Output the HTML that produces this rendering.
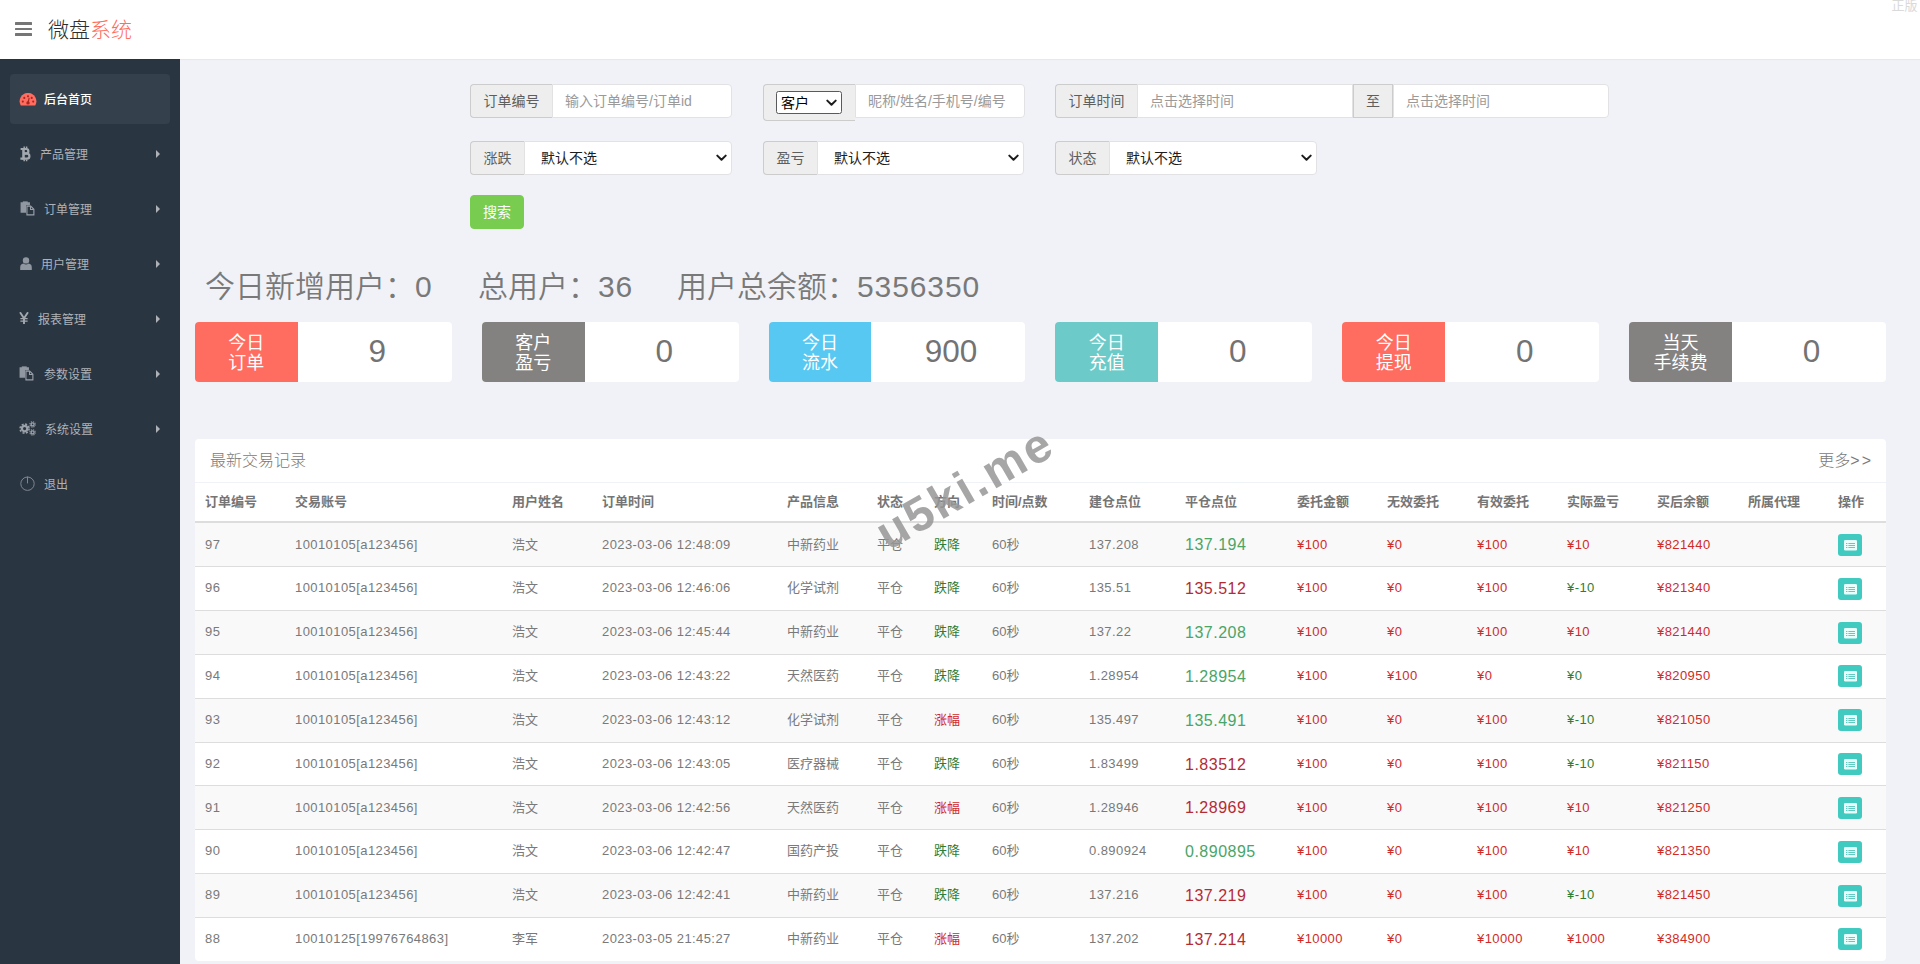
<!DOCTYPE html>
<html lang="zh-CN">
<head>
<meta charset="utf-8">
<title>微盘系统</title>
<style>
*{box-sizing:border-box;}
html,body{margin:0;padding:0;}
body{width:1920px;height:964px;overflow:hidden;background:#f1f2f7;color:#797979;
  font-family:"Liberation Sans","Noto Sans CJK SC",sans-serif;font-size:13px;line-height:1.42857;position:relative;}
a{text-decoration:none;color:inherit;}
ul{list-style:none;margin:0;padding:0;}

/* ---------- header ---------- */
#header{position:absolute;left:0;top:0;width:1920px;height:59px;background:#fff;z-index:5;box-shadow:0 1px 1px rgba(0,0,0,.04);}
#header .toggle{position:absolute;left:15px;top:22px;width:17px;height:14px;}
#header .toggle i{display:block;height:2.7px;background:#767676;margin-bottom:3px;border-radius:.5px;}
#header .logo{position:absolute;left:48px;top:14.5px;font-size:21px;line-height:30px;color:#2e2e2e;font-weight:300;white-space:nowrap;}
#header .logo span{color:#ff6c60;}
#header .tip{position:absolute;left:1891.5px;top:-3px;font-size:13px;line-height:18px;color:#dadada;white-space:nowrap;}

/* ---------- sidebar ---------- */
#sidebar{position:absolute;left:0;top:59px;width:180px;height:905px;background:#2a3542;}
#sidebar ul{margin-top:15px;}
#sidebar li{margin:0 10px 5px 10px;height:50px;position:relative;border-radius:4px;}
#sidebar li.active{background:#35404d;}
#sidebar li a{display:block;height:50px;line-height:50px;color:#aeb2b7;font-size:12px;white-space:nowrap;}
#sidebar li.active a{color:#fff;font-weight:500;}
#sidebar li svg.ic{position:absolute;}
#sidebar li .txt{position:absolute;top:1px;}
#sidebar li .arr{position:absolute;left:146px;top:21px;width:0;height:0;border-top:4px solid transparent;border-bottom:4px solid transparent;border-left:4px solid #aeb2b7;}

/* ---------- main ---------- */
#main{position:absolute;left:180px;top:59px;width:1740px;height:905px;}

/* ---------- search form ---------- */
.ig{position:absolute;height:34px;display:flex;font-size:14px;}
.ig .ad{height:34px;line-height:20px;padding:6px 0;text-align:center;background:#eee;border:1px solid #ccc;color:#5e5e5e;flex:none;white-space:nowrap;}
.ig .ad.first{border-radius:4px 0 0 4px;border-right:0;}
.ig .ad.mid{border-left:0;border-right:0;}
.ig input,.ig select{font-family:"Liberation Sans","Noto Sans CJK SC",sans-serif;font-size:14px;}
.ig .fc{height:34px;flex:none;background:#fff;border:1px solid #e2e2e4;border-radius:0 4px 4px 0;padding:6px 12px;color:#555;line-height:20px;margin:0;outline:0;box-shadow:none;}
.ig .fc.nr{border-radius:0;}
.ig input.fc::placeholder{color:#9a9a9a;opacity:1;}
.ig .sel{position:relative;flex:none;height:34px;}
.ig .sel select{-webkit-appearance:none;appearance:none;width:100%;height:34px;background:#fff;border:1px solid #e2e2e4;border-radius:0 4px 4px 0;padding:6px 12px 6px 16px;color:#1c1c1c;line-height:20px;margin:0;outline:0;}
.ig .sel svg{position:absolute;right:5px;top:13px;pointer-events:none;}
.ig .mini{position:relative;display:inline-block;width:66px;height:23px;vertical-align:top;margin-left:-1px;}
.ig .mini select{-webkit-appearance:none;appearance:none;width:66px;height:23px;background:#fff;border:1px solid #5a5a5a;border-radius:2.5px;padding:0 0 0 4px;color:#000;line-height:20px;margin:0;outline:0;}
.ig .mini svg{position:absolute;right:5px;top:8px;pointer-events:none;}
.btn-s{position:absolute;left:290px;top:136px;width:54px;height:34px;border:1px solid #78cd51;background:#78cd51;color:#fff;border-radius:4px;font-size:14px;line-height:20px;padding:6px 0;text-align:center;font-family:"Liberation Sans","Noto Sans CJK SC",sans-serif;}

/* ---------- stats ---------- */
.sumline{position:absolute;left:0;top:208px;height:40px;line-height:40px;font-size:30px;color:#797979;font-weight:350;white-space:nowrap;}
.sumline span{position:absolute;top:0;}
.sumline b{font-weight:400;letter-spacing:.9px;}
.card{position:absolute;top:263px;width:256.83px;height:60px;background:#fff;border-radius:4px;overflow:hidden;}
.card .sym{position:absolute;left:0;top:0;width:102.7px;height:60px;color:#fff;font-size:18px;line-height:20px;padding-top:10.5px;text-align:center;font-weight:400;}
.card .val{position:absolute;right:0;top:0;width:149px;height:60px;line-height:59px;text-align:center;font-size:31.5px;color:#737373;font-weight:300;}
.c-red{background:#ff6c60;}.c-gray{background:#848281;}.c-blue{background:#57c8f2;}.c-ter{background:#6ccac9;}

/* ---------- panel ---------- */
.panel{position:absolute;left:15px;top:380px;width:1691px;background:#fff;border-radius:4px;overflow:hidden;}
.panel .ph{height:43.857px;padding:11px 15px 9px;border-bottom:1px solid #eff2f7;font-size:16px;line-height:22.857px;color:#797979;font-weight:300;position:relative;}
.panel .ph .more{position:absolute;right:15px;top:11px;white-space:nowrap;}
table.tb{border-collapse:separate;border-spacing:0;table-layout:fixed;width:1691px;}
.tb th{height:40.571px;padding:0 10px;text-align:left;font-weight:700;color:#757575;border-bottom:2px solid #ddd;white-space:nowrap;font-size:13px;line-height:18.57px;vertical-align:middle;}
.tb td{height:43.857px;padding:0 10px;border-bottom:1px solid #ddd;white-space:nowrap;font-size:13px;vertical-align:middle;color:#797979;}
.tb tbody tr:nth-child(odd) td{background:#f9f9f9;}
.tb tbody tr:last-child td{border-bottom:0;height:42.857px;}
.tb td.ls{letter-spacing:.42px;}
.tb td.cp{font-size:16px;letter-spacing:.5px;padding-top:2px;}
.tb td.g1{color:#4aa567;}.tb td.r1{color:#b52b33;}
.tb td.g2{color:#2f7d32;}.tb td.r2{color:#cf2a27;}
.opb{display:inline-block;width:24px;height:22px;background:#41cac0;border-radius:3px;vertical-align:middle;position:relative;}
.opb svg{position:absolute;left:6px;top:6px;}
.wm{position:absolute;left:785px;top:428.5px;font-size:48px;font-weight:700;color:rgba(150,150,150,.85);letter-spacing:2.5px;transform:translate(-50%,-50%) rotate(-30deg);white-space:nowrap;line-height:1;}
</style>
</head>
<body>

<div id="header">
  <div class="toggle"><i></i><i></i><i></i></div>
  <a class="logo">微盘<span>系统</span></a>
  <div class="tip">正版</div>
</div>

<div id="sidebar">
  <ul>
    <li class="active"><a><svg class="ic" style="left:9px;top:19px" width="18" height="13" viewBox="0 0 18 13"><path d="M1.6 12.3A8.4 8.4 0 1 1 16.4 12.3Q16.2 12.6 15.8 12.6H2.2Q1.8 12.6 1.6 12.3Z" fill="#ff6c60"/><g fill="#a8271f"><circle cx="3.8" cy="8.6" r="1.05"/><circle cx="5.3" cy="4.9" r="1.05"/><circle cx="9" cy="3.2" r="1.05"/><circle cx="12.7" cy="4.9" r="1.05"/><circle cx="14.2" cy="8.6" r="1.05"/><circle cx="9" cy="9.9" r="1.7"/><path d="M8.4 9.5L9.7 4.6L10.6 4.9L9.7 9.9Z"/></g></svg><span class="txt" style="left:34px">后台首页</span></a></li>
    <li><a><svg class="ic" style="left:10px;top:17px" width="12" height="16" viewBox="0 0 12 16"><g fill="none" stroke="#a3a8ae" stroke-linecap="butt"><path d="M3.5 2.4V13.6" stroke-width="2.6"/><path d="M0.6 3H6.2a2.15 2.15 0 0 1 0 4.3H3.4" stroke-width="2.2"/><path d="M3.4 7.7H6.9a2.5 2.5 0 0 1 0 5H0.4" stroke-width="2.2"/><path d="M4.2 0.6V2.4M6.6 0.6V2.4M4.2 13.4V15.2M6.6 13.4V15.2" stroke-width="1.5"/></g></svg><span class="txt" style="left:30px">产品管理</span><b class="arr"></b></a></li>
    <li><a><svg class="ic" style="left:9.6px;top:17.4px" width="15" height="15" viewBox="0 0 16 16"><path d="M0.6 1.4H10.6V4.4H6.4V12.6H0.6Z" fill="#9097a0"/><rect x="3" y="0.4" width="5.2" height="2" fill="#9097a0"/><path d="M7.4 5.4H11.4L14.8 8.8V14.8H7.4Z" fill="none" stroke="#9aa0a8" stroke-width="1.2"/><path d="M11.2 5.6V9H14.6" fill="none" stroke="#9aa0a8" stroke-width="1.1"/></svg><span class="txt" style="left:34px">订单管理</span><b class="arr"></b></a></li>
    <li><a><svg class="ic" style="left:10px;top:18px" width="12" height="13" viewBox="0 0 12 13"><circle cx="6" cy="3.4" r="3.2" fill="#9097a0"/><path d="M0.2 12.9V10.4Q0.2 7 3.4 6.6Q6 8.6 8.6 6.6Q11.8 7 11.8 10.4V12.9Z" fill="#9097a0"/></svg><span class="txt" style="left:31px">用户管理</span><b class="arr"></b></a></li>
    <li><a><svg class="ic" style="left:9px;top:18px" width="10" height="12" viewBox="0 0 10 12"><g fill="none" stroke="#a4a9af"><path d="M1 0.3L5 6.2L9 0.3" stroke-width="1.9"/><path d="M5 5.8V12" stroke-width="1.9"/><path d="M1.4 6.6H8.6M1.4 9.2H8.6" stroke-width="1.2"/></g></svg><span class="txt" style="left:28px">报表管理</span><b class="arr"></b></a></li>
    <li><a><svg class="ic" style="left:9.4px;top:17.4px" width="15" height="15" viewBox="0 0 16 16"><path d="M0.6 1.4H10.6V4.4H6.4V12.6H0.6Z" fill="#9097a0"/><rect x="3" y="0.4" width="5.2" height="2" fill="#9097a0"/><path d="M7.4 5.4H11.4L14.8 8.8V14.8H7.4Z" fill="none" stroke="#9aa0a8" stroke-width="1.2"/><path d="M11.2 5.6V9H14.6" fill="none" stroke="#9aa0a8" stroke-width="1.1"/></svg><span class="txt" style="left:34px">参数设置</span><b class="arr"></b></a></li>
    <li><a><svg class="ic" style="left:9px;top:17px" width="18" height="15" viewBox="0 0 18 15"><g fill="none" stroke="#9aa0a8"><circle cx="5.6" cy="7.6" r="2.7" stroke-width="2.2"/><circle cx="5.6" cy="7.6" r="4.5" stroke-width="1.6" stroke-dasharray="2 1.534"/><circle cx="13.6" cy="3.4" r="1.5" stroke-width="1.4"/><circle cx="13.6" cy="3.4" r="2.7" stroke-width="1.1" stroke-dasharray="1.2 0.92"/><circle cx="13.6" cy="11.4" r="1.5" stroke-width="1.4"/><circle cx="13.6" cy="11.4" r="2.7" stroke-width="1.1" stroke-dasharray="1.2 0.92"/></g></svg><span class="txt" style="left:35px">系统设置</span><b class="arr"></b></a></li>
    <li><a><svg class="ic" style="left:10px;top:17px" width="15" height="15" viewBox="0 0 15 15"><circle cx="7.5" cy="7.7" r="6.7" fill="none" stroke="#7f868e" stroke-width="1"/><path d="M7.5 0.6V7.4" stroke="#7f868e" stroke-width="1" fill="none"/></svg><span class="txt" style="left:34px">退出</span></a></li>
  </ul>
</div>

<div id="main">

<div id="search">
  <div class="ig" style="left:290px;top:25px;width:262px;">
    <span class="ad first" style="width:82px">订单编号</span>
    <input class="fc" style="width:180px" type="text" placeholder="输入订单编号/订单id">
  </div>
  <div class="ig" style="left:583px;top:25px;width:262px;">
    <span class="ad first" style="width:92px;height:37px;padding:6px 0 0 0;"><span class="mini"><select><option>客户</option><option>代理</option></select><svg width="11" height="8" viewBox="0 0 11 8"><path d="M1.3 1.6L5.5 5.8L9.7 1.6" fill="none" stroke="#1c1c1c" stroke-width="2" stroke-linecap="round" stroke-linejoin="round"/></svg></span></span>
    <input class="fc" style="width:170px" type="text" placeholder="昵称/姓名/手机号/编号">
  </div>
  <div class="ig" style="left:875px;top:25px;width:554px;">
    <span class="ad first" style="width:82px">订单时间</span>
    <input class="fc nr" style="width:216px" type="text" placeholder="点击选择时间">
    <span class="ad mid" style="width:40px;border-left:1px solid #ccc;border-right:1px solid #ccc;">至</span>
    <input class="fc" style="width:216px" type="text" placeholder="点击选择时间">
  </div>

  <div class="ig" style="left:290px;top:82px;width:262px;">
    <span class="ad first" style="width:54px">涨跌</span>
    <span class="sel" style="width:208px"><select><option>默认不选</option><option>涨幅</option><option>跌降</option></select><svg width="11" height="8" viewBox="0 0 11 8"><path d="M1.3 1.6L5.5 5.8L9.7 1.6" fill="none" stroke="#1c1c1c" stroke-width="2" stroke-linecap="round" stroke-linejoin="round"/></svg></span>
  </div>
  <div class="ig" style="left:583px;top:82px;width:261px;">
    <span class="ad first" style="width:54px">盈亏</span>
    <span class="sel" style="width:207px"><select><option>默认不选</option><option>盈利</option><option>亏损</option></select><svg width="11" height="8" viewBox="0 0 11 8"><path d="M1.3 1.6L5.5 5.8L9.7 1.6" fill="none" stroke="#1c1c1c" stroke-width="2" stroke-linecap="round" stroke-linejoin="round"/></svg></span>
  </div>
  <div class="ig" style="left:875px;top:82px;width:262px;">
    <span class="ad first" style="width:54px">状态</span>
    <span class="sel" style="width:208px"><select><option>默认不选</option><option>建仓</option><option>平仓</option></select><svg width="11" height="8" viewBox="0 0 11 8"><path d="M1.3 1.6L5.5 5.8L9.7 1.6" fill="none" stroke="#1c1c1c" stroke-width="2" stroke-linecap="round" stroke-linejoin="round"/></svg></span>
  </div>
  <a class="btn-s">搜索</a>
</div>

<div class="sumline"><span style="left:25px">今日新增用户：<b>0</b></span><span style="left:298px">总用户：<b>36</b></span><span style="left:497px">用户总余额：<b>5356350</b></span></div>
<div class="card" style="left:15.00px"><div class="sym c-red">今日<br>订单</div><div class="val">9</div></div>
<div class="card" style="left:301.83px"><div class="sym c-gray">客户<br>盈亏</div><div class="val">0</div></div>
<div class="card" style="left:588.66px"><div class="sym c-blue">今日<br>流水</div><div class="val">900</div></div>
<div class="card" style="left:875.49px"><div class="sym c-ter">今日<br>充值</div><div class="val">0</div></div>
<div class="card" style="left:1162.32px"><div class="sym c-red">今日<br>提现</div><div class="val">0</div></div>
<div class="card" style="left:1449.15px"><div class="sym c-gray">当天<br>手续费</div><div class="val">0</div></div>

<div class="panel">
<div class="ph">最新交易记录<span class="more">更多<i style="font-style:normal;letter-spacing:2px;margin-right:-2px">&gt;&gt;</i></span></div>
<table class="tb"><colgroup><col style="width:90px"><col style="width:217px"><col style="width:90px"><col style="width:185px"><col style="width:90px"><col style="width:57px"><col style="width:58px"><col style="width:97px"><col style="width:96px"><col style="width:112px"><col style="width:90px"><col style="width:90px"><col style="width:90px"><col style="width:90px"><col style="width:91px"><col style="width:90px"><col style="width:58px"></colgroup>
<thead><tr><th>订单编号</th><th>交易账号</th><th>用户姓名</th><th>订单时间</th><th>产品信息</th><th>状态</th><th>方向</th><th>时间/点数</th><th>建仓点位</th><th>平仓点位</th><th>委托金额</th><th>无效委托</th><th>有效委托</th><th>实际盈亏</th><th>买后余额</th><th>所属代理</th><th>操作</th></tr></thead>
<tbody>
<tr><td class="ls">97</td><td class="ls">10010105[a123456]</td><td>浩文</td><td class="ls">2023-03-06 12:48:09</td><td>中新药业</td><td>平仓</td><td class="g2">跌降</td><td>60秒</td><td class="ls">137.208</td><td class="cp g1">137.194</td><td class="ls r2">¥100</td><td class="ls r2">¥0</td><td class="ls r2">¥100</td><td class="ls r2">¥10</td><td class="ls r2">¥821440</td><td></td><td><a class="opb"><svg width="13" height="11" viewBox="0 0 13 11"><rect x="0" y="0" width="13" height="10.4" rx="1.2" fill="#e9fffc"/><path d="M2 3.5H3.4M4.4 3.5H11M2 5.5H3.4M4.4 5.5H11M2 7.5H3.4M4.4 7.5H11" stroke="#62cbc1" stroke-width="1" fill="none"/></svg></a></td></tr>
<tr><td class="ls">96</td><td class="ls">10010105[a123456]</td><td>浩文</td><td class="ls">2023-03-06 12:46:06</td><td>化学试剂</td><td>平仓</td><td class="g2">跌降</td><td>60秒</td><td class="ls">135.51</td><td class="cp r1">135.512</td><td class="ls r2">¥100</td><td class="ls r2">¥0</td><td class="ls r2">¥100</td><td class="ls g2">¥-10</td><td class="ls r2">¥821340</td><td></td><td><a class="opb"><svg width="13" height="11" viewBox="0 0 13 11"><rect x="0" y="0" width="13" height="10.4" rx="1.2" fill="#e9fffc"/><path d="M2 3.5H3.4M4.4 3.5H11M2 5.5H3.4M4.4 5.5H11M2 7.5H3.4M4.4 7.5H11" stroke="#62cbc1" stroke-width="1" fill="none"/></svg></a></td></tr>
<tr><td class="ls">95</td><td class="ls">10010105[a123456]</td><td>浩文</td><td class="ls">2023-03-06 12:45:44</td><td>中新药业</td><td>平仓</td><td class="g2">跌降</td><td>60秒</td><td class="ls">137.22</td><td class="cp g1">137.208</td><td class="ls r2">¥100</td><td class="ls r2">¥0</td><td class="ls r2">¥100</td><td class="ls r2">¥10</td><td class="ls r2">¥821440</td><td></td><td><a class="opb"><svg width="13" height="11" viewBox="0 0 13 11"><rect x="0" y="0" width="13" height="10.4" rx="1.2" fill="#e9fffc"/><path d="M2 3.5H3.4M4.4 3.5H11M2 5.5H3.4M4.4 5.5H11M2 7.5H3.4M4.4 7.5H11" stroke="#62cbc1" stroke-width="1" fill="none"/></svg></a></td></tr>
<tr><td class="ls">94</td><td class="ls">10010105[a123456]</td><td>浩文</td><td class="ls">2023-03-06 12:43:22</td><td>天然医药</td><td>平仓</td><td class="g2">跌降</td><td>60秒</td><td class="ls">1.28954</td><td class="cp g1">1.28954</td><td class="ls r2">¥100</td><td class="ls r2">¥100</td><td class="ls r2">¥0</td><td class="ls g2">¥0</td><td class="ls r2">¥820950</td><td></td><td><a class="opb"><svg width="13" height="11" viewBox="0 0 13 11"><rect x="0" y="0" width="13" height="10.4" rx="1.2" fill="#e9fffc"/><path d="M2 3.5H3.4M4.4 3.5H11M2 5.5H3.4M4.4 5.5H11M2 7.5H3.4M4.4 7.5H11" stroke="#62cbc1" stroke-width="1" fill="none"/></svg></a></td></tr>
<tr><td class="ls">93</td><td class="ls">10010105[a123456]</td><td>浩文</td><td class="ls">2023-03-06 12:43:12</td><td>化学试剂</td><td>平仓</td><td class="r2">涨幅</td><td>60秒</td><td class="ls">135.497</td><td class="cp g1">135.491</td><td class="ls r2">¥100</td><td class="ls r2">¥0</td><td class="ls r2">¥100</td><td class="ls g2">¥-10</td><td class="ls r2">¥821050</td><td></td><td><a class="opb"><svg width="13" height="11" viewBox="0 0 13 11"><rect x="0" y="0" width="13" height="10.4" rx="1.2" fill="#e9fffc"/><path d="M2 3.5H3.4M4.4 3.5H11M2 5.5H3.4M4.4 5.5H11M2 7.5H3.4M4.4 7.5H11" stroke="#62cbc1" stroke-width="1" fill="none"/></svg></a></td></tr>
<tr><td class="ls">92</td><td class="ls">10010105[a123456]</td><td>浩文</td><td class="ls">2023-03-06 12:43:05</td><td>医疗器械</td><td>平仓</td><td class="g2">跌降</td><td>60秒</td><td class="ls">1.83499</td><td class="cp r1">1.83512</td><td class="ls r2">¥100</td><td class="ls r2">¥0</td><td class="ls r2">¥100</td><td class="ls g2">¥-10</td><td class="ls r2">¥821150</td><td></td><td><a class="opb"><svg width="13" height="11" viewBox="0 0 13 11"><rect x="0" y="0" width="13" height="10.4" rx="1.2" fill="#e9fffc"/><path d="M2 3.5H3.4M4.4 3.5H11M2 5.5H3.4M4.4 5.5H11M2 7.5H3.4M4.4 7.5H11" stroke="#62cbc1" stroke-width="1" fill="none"/></svg></a></td></tr>
<tr><td class="ls">91</td><td class="ls">10010105[a123456]</td><td>浩文</td><td class="ls">2023-03-06 12:42:56</td><td>天然医药</td><td>平仓</td><td class="r2">涨幅</td><td>60秒</td><td class="ls">1.28946</td><td class="cp r1">1.28969</td><td class="ls r2">¥100</td><td class="ls r2">¥0</td><td class="ls r2">¥100</td><td class="ls r2">¥10</td><td class="ls r2">¥821250</td><td></td><td><a class="opb"><svg width="13" height="11" viewBox="0 0 13 11"><rect x="0" y="0" width="13" height="10.4" rx="1.2" fill="#e9fffc"/><path d="M2 3.5H3.4M4.4 3.5H11M2 5.5H3.4M4.4 5.5H11M2 7.5H3.4M4.4 7.5H11" stroke="#62cbc1" stroke-width="1" fill="none"/></svg></a></td></tr>
<tr><td class="ls">90</td><td class="ls">10010105[a123456]</td><td>浩文</td><td class="ls">2023-03-06 12:42:47</td><td>国药产投</td><td>平仓</td><td class="g2">跌降</td><td>60秒</td><td class="ls">0.890924</td><td class="cp g1">0.890895</td><td class="ls r2">¥100</td><td class="ls r2">¥0</td><td class="ls r2">¥100</td><td class="ls r2">¥10</td><td class="ls r2">¥821350</td><td></td><td><a class="opb"><svg width="13" height="11" viewBox="0 0 13 11"><rect x="0" y="0" width="13" height="10.4" rx="1.2" fill="#e9fffc"/><path d="M2 3.5H3.4M4.4 3.5H11M2 5.5H3.4M4.4 5.5H11M2 7.5H3.4M4.4 7.5H11" stroke="#62cbc1" stroke-width="1" fill="none"/></svg></a></td></tr>
<tr><td class="ls">89</td><td class="ls">10010105[a123456]</td><td>浩文</td><td class="ls">2023-03-06 12:42:41</td><td>中新药业</td><td>平仓</td><td class="g2">跌降</td><td>60秒</td><td class="ls">137.216</td><td class="cp r1">137.219</td><td class="ls r2">¥100</td><td class="ls r2">¥0</td><td class="ls r2">¥100</td><td class="ls g2">¥-10</td><td class="ls r2">¥821450</td><td></td><td><a class="opb"><svg width="13" height="11" viewBox="0 0 13 11"><rect x="0" y="0" width="13" height="10.4" rx="1.2" fill="#e9fffc"/><path d="M2 3.5H3.4M4.4 3.5H11M2 5.5H3.4M4.4 5.5H11M2 7.5H3.4M4.4 7.5H11" stroke="#62cbc1" stroke-width="1" fill="none"/></svg></a></td></tr>
<tr><td class="ls">88</td><td class="ls">10010125[19976764863]</td><td>李军</td><td class="ls">2023-03-05 21:45:27</td><td>中新药业</td><td>平仓</td><td class="r2">涨幅</td><td>60秒</td><td class="ls">137.202</td><td class="cp r1">137.214</td><td class="ls r2">¥10000</td><td class="ls r2">¥0</td><td class="ls r2">¥10000</td><td class="ls r2">¥1000</td><td class="ls r2">¥384900</td><td></td><td><a class="opb"><svg width="13" height="11" viewBox="0 0 13 11"><rect x="0" y="0" width="13" height="10.4" rx="1.2" fill="#e9fffc"/><path d="M2 3.5H3.4M4.4 3.5H11M2 5.5H3.4M4.4 5.5H11M2 7.5H3.4M4.4 7.5H11" stroke="#62cbc1" stroke-width="1" fill="none"/></svg></a></td></tr>
</tbody></table>
</div>
<div class="wm">u5ki.me</div>

</div>

</body>
</html>
